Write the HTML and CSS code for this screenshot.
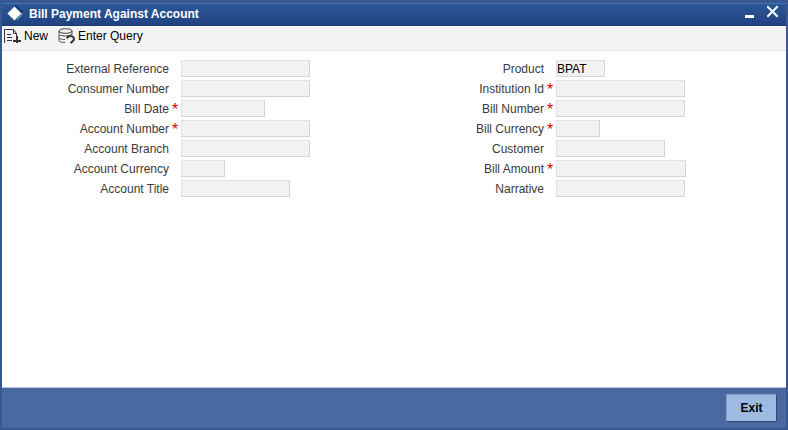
FILE: index.html
```
<!DOCTYPE html>
<html lang="en">
<head>
  <meta charset="UTF-8" />
  <meta name="viewport" content="width=device-width, initial-scale=1.0"/>
  <title>Bill Payment Against Account</title>
  <link rel="stylesheet" href="styles.css">
</head>
<body>
  <div class="window">
    <header class="titlebar">
      <svg class="logo" width="18" height="18" viewBox="0 0 18 18">
        <path d="M8 1h3l6 7-6 8H8z" fill="#0c3f78"/>
        <path d="M16 8l-6 7.500" fill="none" stroke="#8fbcdc" stroke-width="1"/>
        <path d="M7.500 1.500l7 7-7 7-7-7z" fill="#fff"/>
      </svg>
      <h1>Bill Payment Against Account</h1>
      <button type="button" class="win-btn" aria-label="Minimize">
        <svg width="11" height="14" viewBox="0 0 11 14"><path d="M0 10h9v3H0z" fill="#fff"/></svg>
      </button>
      <button type="button" class="win-btn" aria-label="Close">
        <svg width="11" height="14" viewBox="0 0 11 14"><path d="M1 2l9 9M10 2l-9 9" stroke="#fff" stroke-width="2" stroke-linecap="square"/></svg>
      </button>
    </header>

    <nav class="toolbar">
      <button type="button" class="tool">
        <svg width="17" height="16" viewBox="0 0 17 16" fill="none" stroke="#333">
          <path d="M.5 15V1.500H9M9.500 1.500v4h3M9.500 1.500l3 4v3"/>
          <path d="M3 6.500h4M3 9.500h5M3 12.500h5"/>
          <path d="M13 8v7M9 13h8" stroke-width="2"/>
        </svg>
        New
      </button>
      <button type="button" class="tool">
        <svg width="17" height="16" viewBox="0 0 17 16" fill="none" stroke="#444">
          <ellipse cx="7.500" cy="3" rx="6.500" ry="2.300"/>
          <path d="M1 3v3c0 1.200 3 2 6.500 2M14 3v3.500M1 7v2.500c0 1.200 2.500 2 6 2M1 10v2.500c0 1.300 2.500 2 6 2M7.500 8c2.500 0 5-.5 6.500-2"/>
          <path d="M9 10.500c1-3.500 7-3 7 .5 0 2-1.500 2.500-3.500 4" stroke="#333" stroke-width="2"/>
        </svg>
        Enter Query
      </button>
    </nav>

    <main class="content">
      <form class="form" id="billForm">
        <div class="column">
          <div class="row"><label for="extRef">External Reference</label><input class="w-full" id="extRef"></div>
          <div class="row"><label for="consumerNo">Consumer Number</label><input class="w-full" id="consumerNo"></div>
          <div class="row required"><label for="billDate">Bill Date</label><input class="w-date" id="billDate"></div>
          <div class="row required"><label for="accountNo">Account Number</label><input class="w-full" id="accountNo"></div>
          <div class="row"><label for="accountBranch">Account Branch</label><input class="w-full" id="accountBranch"></div>
          <div class="row"><label for="accountCcy">Account Currency</label><input class="w-ccy" id="accountCcy"></div>
          <div class="row"><label for="accountTitle">Account Title</label><input class="w-name" id="accountTitle"></div>
        </div>
        <div class="column">
          <div class="row"><label for="product">Product</label><input class="w-code" id="product" value="BPAT"></div>
          <div class="row required"><label for="institution">Institution Id</label><input class="w-full" id="institution"></div>
          <div class="row required"><label for="billNo">Bill Number</label><input class="w-full" id="billNo"></div>
          <div class="row required"><label for="billCcy">Bill Currency</label><input class="w-ccy" id="billCcy"></div>
          <div class="row"><label for="customer">Customer</label><input class="w-name" id="customer"></div>
          <div class="row required"><label for="billAmount">Bill Amount</label><input class="w-amount" id="billAmount"></div>
          <div class="row"><label for="narrative">Narrative</label><input class="w-full" id="narrative"></div>
        </div>
      </form>
    </main>

    <footer class="footer">
      <button type="button" class="exit">Exit</button>
    </footer>
  </div>
</body>
</html>
```

FILE: styles.css
```
* {
  box-sizing: border-box;
}
body {
  margin: 0;
  font-family: "Liberation Sans", Arial, sans-serif;
  font-size: 12px;
  color: #3a3a3a;
}
button,
input {
  font-family: inherit;
  font-size: inherit;
}
.window {
  display: flex;
  flex-direction: column;
  min-height: 100vh;
  border: 2px solid #385893;
  border-top-width: 3px;
  background: #fff;
}
/* title bar */
.titlebar {
  display: flex;
  align-items: center;
  height: 23px;
  padding: 0 8px 2px 5px;
  border-top: 1px solid #4672b0;
  border-bottom: 1px solid #1d3b70;
  background: linear-gradient(#2c5799, #214281);
  color: #fff;
}
.titlebar h1 {
  flex: 1;
  margin: 0 0 0 4px;
  font-size: 12px;
  line-height: 16px;
}
.win-btn {
  display: flex;
  margin-left: 11px;
  padding: 0 0 4px;
  border: none;
  background: none;
  cursor: pointer;
}
/* toolbar */
.toolbar {
  display: flex;
  gap: 10px;
  height: 25px;
  padding: 0 2px 5px;
  border-bottom: 1px solid #ececec;
  background: #f4f4f4;
}
.tool {
  display: flex;
  align-items: center;
  gap: 3px;
  padding: 0;
  border: none;
  background: none;
  color: #000;
  cursor: pointer;
}
/* form */
.content {
  flex: 1;
  padding: 8px 34px 8px 0;
}
.form {
  display: grid;
  grid-template-columns: 1fr 1fr;
}
.row {
  display: flex;
  align-items: center;
  height: 20px;
  padding-bottom: 1px;
}
.row label {
  width: 167px;
  text-align: right;
}
.row input {
  height: 17px;
  margin-left: 12px;
  padding: 0;
  border: 1px solid #e2e2e2;
  border-right-color: #d4d4d4;
  border-bottom-color: #d4d4d4;
  background: #f2f2f2;
  color: #000;
}
/* red star between label and field */
.row.required::after {
  content: "*";
  order: 1;
  width: 12px;
  padding-top: 2px;
  color: #d00;
  font-size: 16px;
  line-height: 16px;
  text-align: center;
}
.row.required input {
  order: 2;
  margin-left: 0;
}
.row .w-full { width: 129px; }
.row .w-amount { width: 130px; }
.row .w-name { width: 109px; }
.row .w-date { width: 84px; }
.row .w-code { width: 49px; }
.row .w-ccy { width: 44px; }
/* footer */
.footer {
  display: flex;
  justify-content: flex-end;
  padding: 6px 9px;
  border-top: 1px solid #b9c6de;
  background: #4a69a1;
}
.exit {
  width: 51px;
  height: 28px;
  padding: 0;
  border: 1px solid #7f9fce;
  border-right-color: #2c4777;
  border-bottom-color: #2c4777;
  background: #9dbae3;
  color: #000;
  font-weight: bold;
  cursor: pointer;
}
```
